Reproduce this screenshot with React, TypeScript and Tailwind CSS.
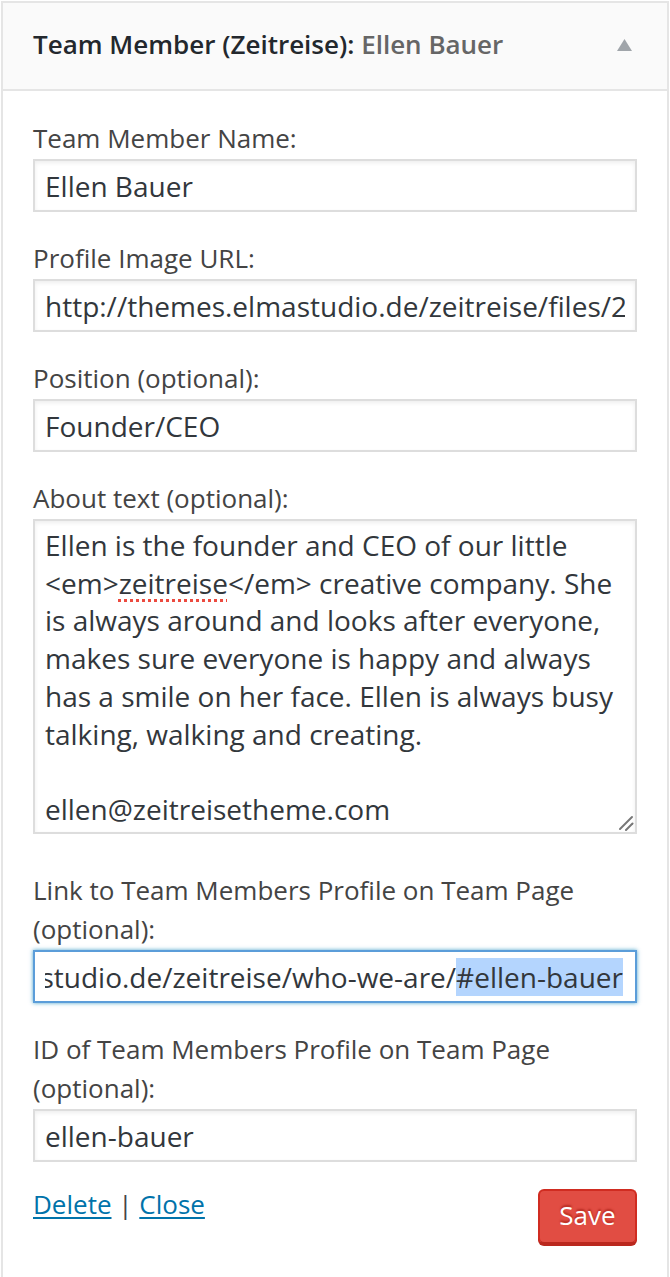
import React from "react";

function Label({ children }: { children: React.ReactNode }) {
  return <div className="text-[26px] leading-[39px] text-[#444]">{children}</div>;
}

function TextBox({ value }: { value: string }) {
  return (
    <div className="mt-[1px] flex h-[53px] items-center border-2 border-[#dddddd] bg-white px-[10px] text-[28px] text-[#32373c] shadow-[inset_0_2px_4px_rgba(0,0,0,0.07)]">
      <div className="flex-1 overflow-hidden whitespace-nowrap leading-normal">{value}</div>
    </div>
  );
}

export default function App() {
  return (
    <div className="min-h-screen bg-white pl-[1px] pt-[1px] font-['Open_Sans',sans-serif]">
      <div className="w-[668px] border-2 border-[#e5e5e5] bg-white">
        {/* Header */}
        <div className="flex h-[88px] items-center justify-between border-b-2 border-[#e5e5e5] bg-[#fafafa] pb-[3px] pl-[30px] pr-[35px]">
          <div className="text-[26px] font-semibold leading-normal text-[#23282d]">
            Team Member (Zeitreise): <span className="text-[#666]">Ellen Bauer</span>
          </div>
          <svg width="15" height="12" viewBox="0 0 15 12" className="mt-[1px]">
            <polygon points="7.5,0 15,12 0,12" fill="#a0a5aa" />
          </svg>
        </div>

        {/* Body */}
        <div className="px-[30px] pb-[36px] pt-[28px]">
          <Label>Team Member Name:</Label>
          <TextBox value="Ellen Bauer" />

          <div className="mt-[27px]">
            <Label>Profile Image URL:</Label>
            <TextBox value="http://themes.elmastudio.de/zeitreise/files/2015/01/ellen-bauer.jpg" />
          </div>

          <div className="mt-[27px]">
            <Label>Position (optional):</Label>
            <TextBox value="Founder/CEO" />
          </div>

          <div className="mt-[27px]">
            <Label>About text (optional):</Label>
            <div className="relative mt-[1px] h-[315px] border-2 border-[#dddddd] bg-white pl-[10px] pt-[6px] text-[28px] leading-[37.7px] text-[#32373c] shadow-[inset_0_2px_4px_rgba(0,0,0,0.07)]">
              <div className="whitespace-pre">
                {"Ellen is the founder and CEO of our little\n<em>"}
                <span className="underline decoration-[#ec4a3f] decoration-dotted decoration-[3px] underline-offset-[5px]">zeitreise</span>
                {"</em> creative company. She\nis always around and looks after everyone,\nmakes sure everyone is happy and always\nhas a smile on her face. Ellen is always busy\ntalking, walking and creating.\n\nellen@zeitreisetheme.com"}
              </div>
              <svg width="16" height="16" viewBox="0 0 16 16" className="absolute bottom-[1px] right-[1px]">
                <line x1="2" y1="14" x2="14" y2="2" stroke="#777" strokeWidth="2" strokeLinecap="round" />
                <line x1="8" y1="15" x2="14.5" y2="8.5" stroke="#777" strokeWidth="2" strokeLinecap="round" />
              </svg>
            </div>
          </div>

          <div className="mt-[37px]">
            <Label>
              Link to Team Members Profile on Team Page
              <br />
              (optional):
            </Label>
            <div className="mt-[1px] flex h-[53px] items-center border-2 border-[#5b9dd9] bg-white pl-[10px] pr-[12px] text-[28px] text-[#32373c] shadow-[0_0_4px_rgba(30,140,190,0.8)]">
              <div className="flex flex-1 justify-end overflow-hidden whitespace-nowrap leading-normal">
                <span className="shrink-0">
                  http://themes.elmastudio.de/zeitreise/who-we-are/
                  <span className="bg-[#b4d5fe]">#ellen-bauer</span>
                </span>
              </div>
            </div>
          </div>

          <div className="mt-[27px]">
            <Label>
              ID of Team Members Profile on Team Page
              <br />
              (optional):
            </Label>
            <TextBox value="ellen-bauer" />
          </div>

          <div className="mt-[23px] flex items-start justify-between">
            <div className="text-[26px] leading-[39px] text-[#444]">
              <a href="#" className="text-[#0073aa] underline decoration-2 underline-offset-[3px]">
                Delete
              </a>{" "}
              | {" "}
              <a href="#" className="text-[#0073aa] underline decoration-2 underline-offset-[3px]">
                Close
              </a>
            </div>
            <button
              type="button"
              className="mt-[4px] flex h-[55px] w-[99px] items-center justify-center rounded-[6px] border-2 border-[#d02c21] border-b-[#ba281e] bg-[#e14d43] pb-[3px] text-[26px] leading-normal text-white shadow-[0_2px_0_#ba281e] [text-shadow:0_-2px_2px_#b52a20]"
            >
              Save
            </button>
          </div>
        </div>
      </div>
    </div>
  );
}
